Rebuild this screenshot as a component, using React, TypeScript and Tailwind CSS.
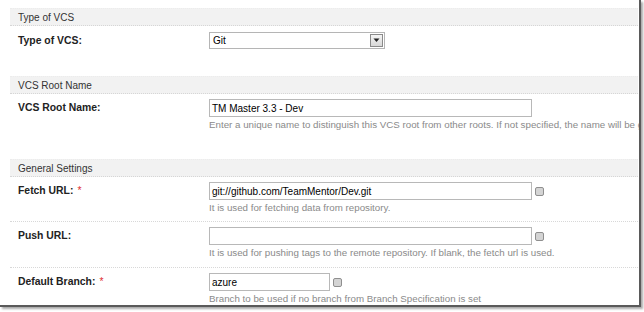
import React from 'react';

// 체크박스 모양의 작은 아이콘
function SmallBox() {
  return (
    <span className="ml-[3px] inline-block h-[9px] w-[9px] rounded-[2px] border border-[#8f8f8f] bg-[#d4d4d4]" />
  );
}

function SectionHeader({ title }: { title: string }) {
  return (
    <div className="flex h-[18px] items-center border-t border-[#ececec] border-b border-dotted border-b-[#d6d6d6] bg-[#f2f2f2] pl-[8px] text-[10px] text-[#333]">
      {title}
    </div>
  );
}

function Label({ text, required }: { text: string; required?: boolean }) {
  return (
    <div className="w-[199px] shrink-0 pl-[8px] text-[10.4px] font-bold text-[#222]">
      {text}
      {required && <span className="ml-[4px] font-normal text-[#e03030]">*</span>}
    </div>
  );
}

function TextInput({ value, width }: { value: string; width: string }) {
  return (
    <div className={`flex h-[18px] items-center border border-[#b8b8b8] bg-white px-[2px] text-[10px] text-black ${width}`}>
      {value}
    </div>
  );
}

function Help({ text }: { text: string }) {
  return <div className="mt-[2px] whitespace-nowrap text-[9.75px] leading-[12px] text-[#8a8a8a]">{text}</div>;
}

export default function App() {
  return (
    <div className="h-[312px] w-[644px] bg-white font-['Liberation_Sans',Arial,sans-serif]">
      <div className="h-[307px] w-[641px] overflow-hidden border-r-2 border-b-2 border-[#5a5a5a] shadow-[2px_2px_2px_#aaa]">
        <div className="w-[700px] pl-[10px] pt-[8px]">
          <div className="w-[628px]">
            {/* Type of VCS */}
            <SectionHeader title="Type of VCS" />
            <div className="flex h-[50px] items-start pt-[6px]">
              <div className="flex h-[17px] items-center">
                <Label text="Type of VCS:" />
              </div>
              <div className="flex h-[17px] w-[176px] items-center justify-between border border-[#b5b5b5] bg-white pl-[3px] pr-[1px] text-[10px]">
                <span>Git</span>
                <span className="flex h-[13px] w-[13px] items-center justify-center border border-[#8a8a8a] bg-gradient-to-b from-[#f4f4f4] to-[#d8d8d8]">
                  <svg width="7" height="5" viewBox="0 0 7 5">
                    <path d="M0.5 0.5 H6.5 L3.5 4 Z" fill="#222" />
                  </svg>
                </span>
              </div>
            </div>

            {/* VCS Root Name */}
            <SectionHeader title="VCS Root Name" />
            <div className="flex h-[65px] items-start pt-[5px]">
              <div className="flex h-[18px] items-center">
                <Label text="VCS Root Name:" />
              </div>
              <div>
                <TextInput value="TM Master 3.3 - Dev" width="w-[323px]" />
                <Help text="Enter a unique name to distinguish this VCS root from other roots. If not specified, the name will be generated automatically." />
              </div>
            </div>
          </div>
          <div className="w-[628px]">
            {/* General Settings */}
            <SectionHeader title="General Settings" />
            <div className="flex h-[45px] items-start border-b border-dotted border-[#d8d8d8] pt-[5px]">
              <div className="flex h-[18px] items-center">
                <Label text="Fetch URL:" required />
              </div>
              <div>
                <div className="flex items-center">
                  <TextInput value="git://github.com/TeamMentor/Dev.git" width="w-[323px]" />
                  <SmallBox />
                </div>
                <Help text="It is used for fetching data from repository." />
              </div>
            </div>
            <div className="flex h-[46px] items-start border-b border-dotted border-[#d8d8d8] pt-[5px]">
              <div className="flex h-[18px] items-center">
                <Label text="Push URL:" />
              </div>
              <div>
                <div className="flex items-center">
                  <TextInput value="" width="w-[323px]" />
                  <SmallBox />
                </div>
                <Help text="It is used for pushing tags to the remote repository. If blank, the fetch url is used." />
              </div>
            </div>
            <div className="flex items-start pt-[5px]">
              <div className="flex h-[18px] items-center">
                <Label text="Default Branch:" required />
              </div>
              <div>
                <div className="flex items-center">
                  <TextInput value="azure" width="w-[121px]" />
                  <SmallBox />
                </div>
                <Help text="Branch to be used if no branch from Branch Specification is set" />
              </div>
            </div>
          </div>
        </div>
      </div>
    </div>
  );
}
